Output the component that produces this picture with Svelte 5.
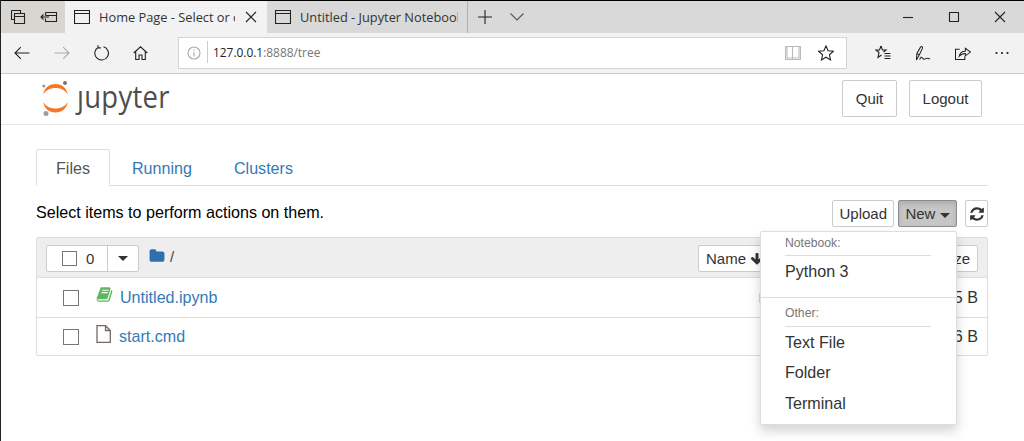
<script>
	const tabs = ['Files', 'Running', 'Clusters'];
	const files = [
		{ name: 'Untitled.ipynb', kind: 'book', size: '5 B' },
		{ name: 'start.cmd', kind: 'file', size: '6 B' },
	];
	const other = ['Text File', 'Folder', 'Terminal'];
</script>

<div class="window">
	<div class="tabstrip">
		<div class="strip-icons">
			<svg width="16" height="16" viewBox="0 0 16 16" class="ic"><path d="M1.500 1.500h9v3M1.500 1.500v9h3M4.500 4.500h10v10h-10zM4.500 7.500h10"/></svg>
			<svg width="18" height="16" viewBox="0 0 18 16" class="ic"><path d="M5.500 3.500h11v9h-11v-3M5.500 3.500v3M1 8h8M3.500 5.500L1 8l2.500 2.500M5.500 6.500h11"/></svg>
		</div>
		<div class="tab active">
			<svg width="16" height="14" viewBox="0 0 16 14" class="ic"><path d="M.5.5h15v13H.5zM.5 3.500h15"/></svg>
			<span class="tab-title">Home Page - Select or c</span>
			<svg width="12" height="12" viewBox="0 0 12 12" class="ic close"><path d="M1 1l10 10M11 1L1 11"/></svg>
		</div>
		<div class="tab other">
			<svg width="16" height="14" viewBox="0 0 16 14" class="ic"><path d="M.5.5h15v13H.5zM.5 3.500h15"/></svg>
			<span class="tab-title">Untitled - Jupyter Notebook</span>
		</div>
		<div class="strip-new">
			<svg width="14" height="14" viewBox="0 0 14 14" class="ic"><path d="M7 0v14M0 7h14"/></svg>
			<svg width="14" height="8" viewBox="0 0 14 8" class="ic thin"><path d="M.5 .5L7 7l6.500-6.500"/></svg>
		</div>
		<div class="win-controls">
			<svg width="12" height="12" viewBox="0 0 12 12" class="ic"><path d="M1 6.500h10"/></svg>
			<svg width="12" height="12" viewBox="0 0 12 12" class="ic"><path d="M1.500 1.500h9v9h-9z"/></svg>
			<svg width="12" height="12" viewBox="0 0 12 12" class="ic"><path d="M1 1l10 10M11 1L1 11"/></svg>
		</div>
	</div>

	<div class="toolbar">
		<div class="nav">
			<svg width="16" height="14" viewBox="0 0 16 14" class="ic"><path d="M15.500 7H1M6.800 1.200L1 7l5.800 5.800"/></svg>
			<svg width="16" height="14" viewBox="0 0 16 14" class="ic faded"><path d="M.5 7H15M9.200 1.200L15 7l-5.800 5.800"/></svg>
			<svg width="15" height="16" viewBox="0 0 15 16" class="ic"><path d="M4.300 2.300A6.800 6.800 0 1 0 9.500 1.700M4 .3v2.600h2.800"/></svg>
			<svg width="15" height="14" viewBox="0 0 15 14" class="ic"><path d="M.7 7L7.500 .8 14.300 7M2.700 5.500v8h3.300V9h3v4.500h3.300v-8"/></svg>
		</div>
		<div class="address">
			<svg width="14" height="14" viewBox="0 0 14 14" class="ic faded info"><circle cx="7" cy="7" r="6"/><path d="M7 6v4.500M7 3.500v1.200"/></svg>
			<span class="addr-text"><b>127.0.0.1</b>:8888/tree</span>
			<svg width="16" height="14" viewBox="0 0 16 14" class="ic pale"><path d="M.5.5h7v13h-7zM7.500.5h8v13h-8zM2 .5v11.500h5.500M14 .5v11.500H7.500"/></svg>
			<svg width="16" height="16" viewBox="0 0 16 16" class="ic star"><path d="M8 1l2.100 4.800 5.200.5-3.900 3.500 1.100 5.100L8 12.200l-4.500 2.700 1.100-5.100L.7 6.300l5.200-.5z"/></svg>
		</div>
		<div class="actions">
			<svg width="16" height="16" viewBox="0 0 16 16" class="ic"><path d="M6 1l1.500 4H11L8.500 7M6 1L4.500 5H.8L4 7.500 3 12.500l3.500-2.500M9.500 8.500h6M9.500 11h6M9.500 13.500h6"/></svg>
			<svg width="16" height="17" viewBox="0 0 17 17" class="ic"><path d="M1.500 15.500l.5-7L6 1.500c1-1 2.500 0 2 1.300l-3.500 7.200zM2 8.500l2.500 1.500M5 15c1-3 2-3 3-1.500s2 1.500 3.500.5 2-1 4.500.5"/></svg>
			<svg width="16" height="15" viewBox="0 0 17 16" class="ic"><path d="M5 3.500H.5v11h10V11M4.500 11c.5-4 3-5.500 6.500-5.500V2.500l5.500 4-5.500 4V8c-3 0-5 1-6.500 3z"/></svg>
			<svg width="14" height="4" viewBox="0 0 14 4" class="dots"><circle cx="1.500" cy="2" r="1.100"/><circle cx="7" cy="2" r="1.100"/><circle cx="12.500" cy="2" r="1.100"/></svg>
		</div>
	</div>

	<header class="site-header">
		<div class="logo">
			<svg width="28" height="37" viewBox="0 0 28 37">
				<path fill="#f37726" d="M14.500 8c-5 0-9.500 2-12.500 6.500C3.500 8 8 4 14.500 4s11 4 12.500 10.500C24 10 19.500 8 14.500 8zM14.500 28.500c5 0 9.500-2 12.500-6.500-1.500 6.500-6 10.500-12.500 10.500S3.500 28.500 2 22c3 4.500 7.500 6.500 12.500 6.500z"/>
				<circle cx="24" cy="3" r="2" fill="#767677"/>
				<circle cx="2.800" cy="6" r="1.500" fill="#989798"/>
				<circle cx="5" cy="33.500" r="2.500" fill="#9e9e9e"/>
			</svg>
			<span class="wordmark">ȷupyter</span>
		</div>
		<div class="header-btns">
			<button class="btn large quit">Quit</button>
			<button class="btn large logout">Logout</button>
		</div>
	</header>

	<main class="page">
		<ul class="nav-tabs">
			{#each tabs as t, i}
				<li class:current={i === 0}>{t}</li>
			{/each}
		</ul>

		<div class="action-row">
			<span>Select items to perform actions on them.</span>
			<div class="action-btns">
				<button class="btn small">Upload</button>
				<div class="new-wrap">
					<button class="btn small pressed">New <i class="caret"></i></button>
					<div class="menu">
						<div class="menu-head first">Notebook:</div>
						<div class="menu-item py">Python 3</div>
						<div class="menu-sep"></div>
						<div class="menu-head">Other:</div>
						{#each other as o}
							<div class="menu-item">{o}</div>
						{/each}
					</div>
				</div>
				<button class="btn small refresh" aria-label="Refresh">
					<svg width="16" height="16" viewBox="0 0 1792 1792"><path fill="#333" d="M1639 1056q0 5-1 7-64 268-268 434.500t-478 166.500q-146 0-282.500-55t-243.500-157l-129 129q-19 19-45 19t-45-19-19-45v-448q0-26 19-45t45-19h448q26 0 45 19t19 45-19 45l-137 137q71 66 161 102t187 36q134 0 250-65t186-179q11-17 53-117 8-23 30-23h192q13 0 22.500 9.500t9.500 22.500zm25-800v448q0 26-19 45t-45 19h-448q-26 0-45-19t-19-45 19-45l138-138q-148-137-349-137-134 0-250 65t-186 179q-11 17-53 117-8 23-30 23h-199q-13 0-22.500-9.500t-9.500-22.500v-7q65-268 270-434.500t480-166.500q146 0 284 55.500t245 156.500l130-129q19-19 45-19t45 19 19 45z"/></svg>
				</button>
			</div>
		</div>

		<div class="list">
			<div class="list-head">
				<div class="select-group">
					<span class="sel-left"><i class="check"></i>0</span>
					<span class="sel-right"><i class="caret"></i></span>
				</div>
				<svg width="16" height="16" viewBox="0 0 1792 1792" class="folder"><path fill="#2f6fb0" d="M1728 608v704q0 92-66 158t-158 66h-1216q-92 0-158-66t-66-158v-960q0-92 66-158t158-66h320q92 0 158 66t66 158v32h672q92 0 158 66t66 158z"/></svg>
				<span class="slash">/</span>
				<div class="sort-btns">
					<span class="sort-name">Name <svg width="14" height="14" viewBox="0 0 1792 1792"><path fill="#333" d="M1675 832q0 53-37 90l-651 652q-39 37-91 37-53 0-90-37l-651-652q-38-36-38-90 0-53 38-91l74-75q39-37 91-37 53 0 90 37l294 294v-704q0-52 38-90t90-38h128q52 0 90 38t38 90v704l294-294q37-37 90-37 52 0 91 37l75 75q37 39 37 91z"/></svg></span>
					<span class="sort-size">Size</span>
				</div>
			</div>
			{#each files as f, i}
				<div class="row">
					<i class="check"></i>
					{#if f.kind === 'book'}
						<svg width="17" height="17" viewBox="0 0 1792 1792" class="file-ic book"><path fill="#5cb85c" d="M1703 478q40 57 18 129l-275 906q-19 64-76.500 107.500t-122.500 43.500h-923q-77 0-148.500-53.500t-99.500-131.500q-24-67-2-127 0-4 3-27t4-37q1-8-3-21.500t-3-19.500q2-11 8-21t16.500-23.500 16.500-23.500q23-38 45-91.500t30-91.500q3-10 .5-30t-.5-28q3-11 17-28t17-23q21-36 42-92t25-90q1-9-2.500-32t.5-28q4-13 22-30.500t22-22.500q19-26 42.500-84.500t27.500-96.500q1-8-3-25.500t-2-26.500q2-8 9-18t18-23 17-21q8-12 16.500-35.500t15-44.500 17-45.500 21-34.500 27.500-15.500 36.500 3.500l-1 3q39-9 52-9h761q74 0 114 56t18 130l-274 906q-36 119-71.500 153.500t-128.500 34.500h-869q-27 0-38 15-11 16-1 43 24 70 144 70h923q29 0 56-15.500t35-41.500l300-987q7-22 5-57 38 15 59 43zm-1064 2q-4 13 2 22.500t20 9.500h608q13 0 25.500-9.500t16.500-22.500l21-64q4-13-2-22.500t-20-9.500h-608q-13 0-25.500 9.500t-16.500 22.500zm-83 256q-4 13 2 22.500t20 9.500h608q13 0 25.500-9.500t16.500-22.500l21-64q4-13-2-22.500t-20-9.500h-608q-13 0-25.500 9.500t-16.500 22.500z"/></svg>
					{:else}
						<svg width="15" height="18" viewBox="0 0 15 18" class="file-ic"><path fill="none" stroke="#75685f" stroke-width="1.300" d="M1 .7h8.500L14.300 5.500v11.800H1zM9.500.7v4.800h4.800"/></svg>
					{/if}
					<a class="file-link" href="#top">{f.name}</a>
					{#if i === 0}<span class="sliver"></span>{/if}
					<span class="size">{f.size}</span>
				</div>
			{/each}
		</div>
	</main>
</div>

<style>
	:global(body) {
		margin: 0;
	}
	.window {
		width: 1024px;
		height: 441px;
		box-sizing: border-box;
		border-left: 1px solid #222;
		overflow: hidden;
		background: #fff;
		display: flex;
		flex-direction: column;
		font-family: "Liberation Sans", Arial, sans-serif;
		font-size: 16.100px;
		color: #000;
	}
	.ic {
		fill: none;
		stroke: #222;
		stroke-width: 1.100;
		flex: none;
	}
	.ic.faded { stroke: #aaa; }
	.ic.pale { stroke: #bbb; }
	.ic.thin { stroke: #555; }

	.tabstrip {
		height: 33px;
		flex: none;
		box-sizing: border-box;
		border-top: 1px solid #000;
		background: #d9d9d9;
		display: flex;
		align-items: stretch;
		font-family: "Open Sans", "Noto Sans", sans-serif;
		font-size: 12.800px;
		color: #333;
	}
	.strip-icons {
		width: 64px;
		background: #d8d6d0;
		display: flex;
		align-items: center;
		gap: 14px;
		padding-left: 9px;
		box-sizing: border-box;
	}
	.tab {
		display: flex;
		align-items: center;
		box-sizing: border-box;
		gap: 9px;
	}
	.tab.active {
		width: 202px;
		padding-left: 9px;
		background: #f2f2f2;
	}
	.tab.other {
		width: 199px;
		margin-left: 2px;
		padding: 0 9px 0 6px;
		border-right: 1px solid #b0b0b0;
	}
	.tab-title {
		flex: 1;
		min-width: 0;
		white-space: nowrap;
		overflow: hidden;
	}
	.close {
		margin: 0 10px 0 1px;
	}
	.strip-new {
		display: flex;
		align-items: center;
		gap: 18px;
		padding-left: 10px;
	}
	.win-controls {
		margin-left: auto;
		display: flex;
		align-items: center;
		gap: 34px;
		padding-right: 18px;
	}

	.toolbar {
		height: 41px;
		flex: none;
		box-sizing: border-box;
		background: #f2f2f2;
		border-bottom: 1px solid #ccc;
		display: flex;
		align-items: center;
	}
	.nav {
		width: 177px;
		display: flex;
		align-items: center;
		gap: 24px;
		padding-left: 13px;
		box-sizing: border-box;
	}
	.address {
		width: 669px;
		height: 32px;
		box-sizing: border-box;
		background: #fff;
		border: 1px solid #d4d4d4;
		display: flex;
		align-items: center;
		font-family: "Open Sans", "Noto Sans", sans-serif;
		font-size: 11.900px;
		color: #777;
	}
	.info {
		margin-left: 8px;
	}
	.addr-text {
		flex: 1;
		margin-left: 6px;
		padding-left: 5px;
		border-left: 1px solid #ccc;
		line-height: 22px;
		margin-bottom: 3px;
	}
	.addr-text b {
		font-weight: 400;
		color: #222;
	}
	.star {
		margin: 0 12px 0 17px;
	}
	.actions {
		flex: 1;
		display: flex;
		align-items: center;
		gap: 24px;
		padding-left: 28px;
	}
	.dots {
		fill: #222;
	}

	.site-header {
		height: 51px;
		flex: none;
		border-bottom: 1px solid #e7e7e7;
		display: flex;
		justify-content: space-between;
		padding: 6px 42px 0 40px;
		box-sizing: border-box;
	}
	.logo {
		display: flex;
		gap: 8px;
	}
	.wordmark {
		font-family: "Open Sans", "Noto Sans", sans-serif;
		font-size: 31px;
		line-height: 33px;
		color: #4e4e4e;
		letter-spacing: .35px;
		transform: scaleX(.885);
		transform-origin: left;
	}
	.header-btns {
		display: flex;
		gap: 12px;
		height: 37px;
	}
	.btn {
		font: inherit;
		color: #333;
		background: #fff;
		border: 1px solid #ccc;
		border-radius: 2px;
		padding: 0;
		margin: 0;
	}
	.btn.large {
		font-size: 15px;
	}
	.btn.quit {
		width: 55px;
	}
	.btn.logout {
		width: 73px;
	}
	.btn.small {
		height: 27px;
		font-size: 15px;
		padding: 0 6px;
	}
	.btn.pressed {
		background: #c6c6c6;
		border-color: #8c8c8c;
		box-shadow: inset 0 3px 5px rgba(0, 0, 0, .125);
		width: 59px;
	}
	.btn.small.refresh {
		width: 23px;
		padding: 0;
		display: flex;
		align-items: center;
		justify-content: center;
	}
	.caret {
		display: inline-block;
		border-top: 5px solid #333;
		border-left: 5px solid transparent;
		border-right: 5px solid transparent;
		vertical-align: middle;
	}

	.page {
		padding: 24px 36px 0 35px;
	}
	.nav-tabs {
		list-style: none;
		margin: 0;
		padding: 0;
		display: flex;
		height: 36px;
		border-bottom: 1px solid #ddd;
		color: #337ab7;
	}
	.nav-tabs li {
		padding: 0 20px 0 22px;
		line-height: 38px;
		height: 37px;
		box-sizing: border-box;
	}
	.nav-tabs li.current {
		color: #555;
		background: #fff;
		border: 1px solid #ddd;
		border-bottom-color: #fff;
		border-radius: 2px 2px 0 0;
		padding: 0 19px;
		line-height: 36px;
	}
	.action-row {
		display: flex;
		justify-content: space-between;
		align-items: flex-start;
		margin-top: 14px;
		height: 37px;
		line-height: 25px;
	}
	.action-btns {
		display: flex;
		gap: 4px;
		line-height: normal;
	}
	.action-btns .refresh {
		margin-left: 4px;
	}
	.new-wrap {
		position: relative;
	}
	.menu {
		position: absolute;
		top: 31px;
		right: 0;
		width: 197px;
		height: 194px;
		box-sizing: border-box;
		background: #fff;
		border: 1px solid #ddd;
		border-radius: 2px;
		box-shadow: 0 6px 12px rgba(0, 0, 0, .175);
		z-index: 5;
		color: #333;
		padding-top: 1px;
	}
	.menu-head {
		margin: 0 25px 0 24px;
		font-size: 12.200px;
		color: #777;
		line-height: 20px;
		height: 22px;
		border-bottom: 1px solid #ddd;
	}
	.menu-head:not(.first) {
		margin-top: 4px;
		height: 24px;
		line-height: 22px;
	}
	.menu-item {
		padding-left: 24px;
		line-height: 30.500px;
	}
	.menu-item.py {
		margin-bottom: 10px;
	}
	.menu-sep {
		border-top: 1px solid #ddd;
	}

	.list {
		border: 1px solid #ddd;
		border-radius: 2px;
		height: 119px;
		box-sizing: border-box;
	}
	.list-head {
		height: 40px;
		background: #eee;
		border-bottom: 1px solid #ddd;
		box-sizing: border-box;
		display: flex;
		align-items: center;
		padding: 0 9px;
	}
	.select-group {
		display: flex;
		height: 27px;
		background: #fff;
		border: 1px solid #ccc;
		border-radius: 2px;
		box-sizing: border-box;
		color: #333;
		font-size: 15px;
		line-height: 25px;
		margin-top: 2px;
	}
	.sel-left {
		width: 61px;
		display: flex;
		align-items: center;
		gap: 9px;
		padding-left: 15px;
		box-sizing: border-box;
		border-right: 1px solid #ccc;
	}
	.sel-right {
		width: 30px;
		display: flex;
		align-items: center;
		justify-content: center;
	}
	.check {
		width: 16px;
		height: 16px;
		box-sizing: border-box;
		border: 1px solid #767676;
		background: #fff;
		flex: none;
	}
	.sel-left .check {
		width: 15px;
		height: 15px;
	}
	.folder {
		margin-left: 10px;
		margin-bottom: 3px;
	}
	.slash {
		margin-left: 5px;
		color: #444;
		font-size: 15px;
		margin-bottom: 2px;
	}
	.sort-btns {
		margin-left: auto;
		width: 280px;
		height: 27px;
		display: flex;
		justify-content: space-between;
		font-size: 15px;
		line-height: 25px;
		color: #333;
		margin-top: 2px;
	}
	.sort-name, .sort-size {
		background: #fff;
		border: 1px solid #ccc;
		border-radius: 2px;
		padding: 0 7px;
	}
	.sort-name svg {
		vertical-align: -2px;
	}
	.row {
		height: 39px;
		box-sizing: border-box;
		display: flex;
		align-items: center;
		padding: 0 9px 0 26px;
	}
	.row + .row {
		border-top: 1px solid #ddd;
		height: 38px;
	}
	.file-ic {
		margin-left: 17px;
		margin-bottom: 6px;
	}
	.file-ic.book {
		margin-right: -1px;
	}
	.file-link {
		color: #337ab7;
		text-decoration: none;
		margin-left: 8px;
	}
	.sliver {
		width: 2px;
		height: 10px;
		background: #e6d9b8;
		margin-left: 541px;
	}
	.size {
		margin-left: auto;
		color: #333;
	}
</style>
